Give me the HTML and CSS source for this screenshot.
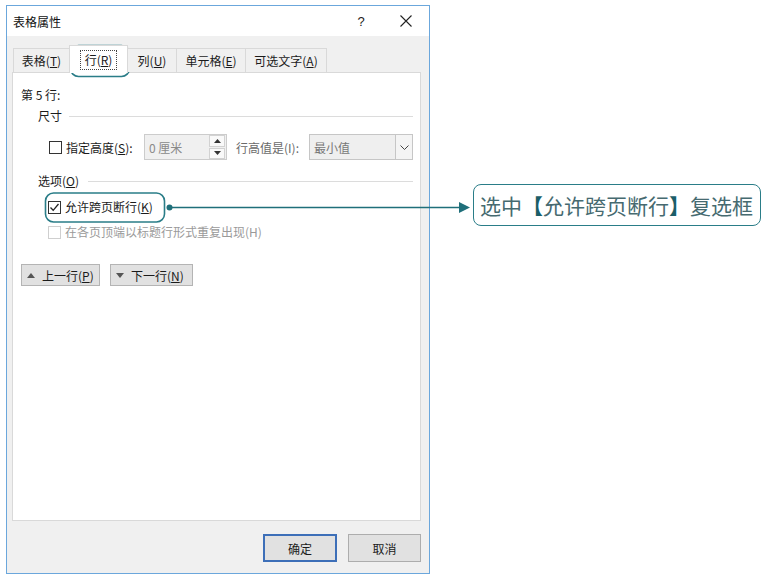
FILE: index.html
```html
<!DOCTYPE html>
<html lang="zh">
<head>
<meta charset="utf-8">
<title>表格属性</title>
<link rel="stylesheet" href="styles.css">
</head>
<body>
<div class="page">
  <div class="dialog">
    <div class="titlebar">
      <span class="title">表格属性</span>
      <span class="help">?</span>
      <span class="close">
        <svg width="12" height="12" viewBox="0 0 12 12"><path d="M0.5 0.5 L11.5 11.5 M11.5 0.5 L0.5 11.5" stroke="#222" stroke-width="1.1" fill="none"/></svg>
      </span>
    </div>
    <div class="body">
      <div class="tabs">
        <div class="tab t1">表格(<u>T</u>)</div>
        <div class="tab t2 active"><span class="focus">行(<u>R</u>)</span></div>
        <div class="tab t3">列(<u>U</u>)</div>
        <div class="tab t4">单元格(<u>E</u>)</div>
        <div class="tab t5">可选文字(<u>A</u>)</div>
      </div>
      <div class="panel">
        <div class="rowlabel">第 5 行:</div>
        <div class="group">
          <span class="gtitle">尺寸</span><span class="gline"></span>
        </div>
        <div class="ctrlrow">
          <span class="chkwrap">
            <span class="chk"></span>
            <span class="clabel">指定高度(<u>S</u>):</span>
          </span>
          <span class="spin">
            <span class="spinval">0 厘米</span>
            <span class="spinbtns">
              <span class="sb up"><svg width="7" height="4" viewBox="0 0 7 4"><path d="M0 4 L3.5 0 L7 4 Z" fill="#333"/></svg></span>
              <span class="sb down"><svg width="7" height="4" viewBox="0 0 7 4"><path d="M0 0 L3.5 4 L7 0 Z" fill="#333"/></svg></span>
            </span>
          </span>
          <span class="hlabel">行高值是(I):</span>
          <span class="select">
            <span class="selval">最小值</span>
            <span class="selbtn"><svg width="9" height="5" viewBox="0 0 9 5"><path d="M0.5 0.5 L4.5 4.5 L8.5 0.5" stroke="#444" stroke-width="1" fill="none"/></svg></span>
          </span>
        </div>
        <div class="group g2">
          <span class="gtitle">选项(<u>O</u>)</span><span class="gline"></span>
        </div>
        <div class="optrow">
          <span class="chk checked"><svg width="11" height="11" viewBox="0 0 11 11"><path d="M1.5 5.5 L4.2 8.3 L9.5 2" stroke="#222" stroke-width="1.3" fill="none"/></svg></span>
          <span class="olabel">允许跨页断行(<u>K</u>)</span>
        </div>
        <div class="optrow disabled">
          <span class="chk dis"></span>
          <span class="olabel">在各页顶端以标题行形式重复出现(H)</span>
        </div>
        <div class="navrow">
          <span class="navbtn b1"><svg width="8" height="5" viewBox="0 0 8 5"><path d="M0 5 L4 0 L8 5 Z" fill="#555"/></svg><span class="navtext">上一行(<u>P</u>)</span></span>
          <span class="navbtn b2"><svg width="8" height="5" viewBox="0 0 8 5"><path d="M0 0 L4 5 L8 0 Z" fill="#555"/></svg><span class="navtext">下一行(<u>N</u>)</span></span>
        </div>
      </div>
      <div class="footer">
        <span class="btn ok">确定</span>
        <span class="btn cancel">取消</span>
      </div>
    </div>
  </div>

  <svg class="overlay" width="764" height="577" viewBox="0 0 764 577">
    <rect x="70.5" y="45.5" width="59" height="31" rx="8" ry="8" fill="none" stroke="#2a7d88" stroke-width="1.6"/>
    <rect x="45.5" y="193" width="119" height="29" rx="8" ry="8" fill="none" stroke="#2a7d88" stroke-width="1.6"/>
    <circle cx="169.5" cy="207.5" r="3" fill="#1f6f7a"/>
    <line x1="169.5" y1="207.5" x2="462" y2="207.5" stroke="#1f6f7a" stroke-width="1.6"/>
    <path d="M459 202 L470 207.5 L459 213 Z" fill="#1f6f7a"/>
  </svg>

  <div class="callout">选中<span class="br">【</span>允许跨页断行<span class="br">】</span>复选框</div>
</div>
</body>
</html>
```

FILE: styles.css
```css
* { box-sizing: border-box; }
html, body { margin: 0; padding: 0; background: #ffffff; }
body {
  font-family: "Noto Sans CJK SC", "Microsoft YaHei", "Noto Sans", sans-serif;
  font-size: 12px;
  color: #1b1b1b;
}
.page {
  position: relative;
  width: 764px;
  height: 577px;
  padding: 5px 0 0 6px;
}
u { text-decoration: underline; text-underline-offset: 1px; }

.dialog {
  width: 424px;
  height: 569px;
  border: 1px solid #6ba7dc;
  display: flex;
  flex-direction: column;
  background: #fff;
}
.titlebar {
  height: 30px;
  display: flex;
  align-items: center;
  padding-left: 6px;
  background: #fff;
  flex: none;
}
.title { flex: 1; font-size: 12px; color: #111; }
.help {
  width: 10px;
  text-align: center;
  font-size: 13px;
  font-family: "Liberation Sans", sans-serif;
  color: #222;
  margin-right: 34px;
}
.close {
  width: 12px;
  height: 12px;
  margin-right: 17px;
  display: flex;
}

.body {
  flex: 1;
  display: flex;
  flex-direction: column;
  background: #f0f0f0;
  padding: 0 8px 0 5px;
}
.tabs {
  height: 36px;
  display: flex;
  align-items: flex-end;
  padding-left: 1px;
  flex: none;
  position: relative;
  z-index: 1;
}
.tab {
  height: 24px;
  border: 1px solid #d9d9d9;
  border-bottom: none;
  display: flex;
  align-items: center;
  justify-content: center;
  margin-right: -1px;
  background: #f0f0f0;
  color: #1b1b1b;
}
.t1 { width: 57px; }
.t2 { width: 59px; }
.t3 { width: 50px; }
.t4 { width: 70px; }
.t5 { width: 82px; }
.tab.active {
  height: 28px;
  background: #fff;
  margin-bottom: -1px;
}
.focus {
  border: 1px dotted #444;
  padding: 1px 4px;
  line-height: 16px;
}

.panel {
  flex: 1;
  background: #fff;
  border: 1px solid #d9d9d9;
  padding: 14px 7px 0 8px;
  display: flex;
  flex-direction: column;
}
.rowlabel { height: 16px; line-height: 16px; }
.group {
  height: 16px;
  margin-top: 5px;
  display: flex;
  align-items: center;
  padding-left: 17px;
}
.gtitle { line-height: 16px; }
.gline { flex: 1; height: 1px; background: #dcdcdc; margin-left: 7px; }
.g2 { margin-top: 13px; }
.g2 .gline { margin-left: 9px; }

.ctrlrow {
  height: 26px;
  margin-top: 10px;
  display: flex;
  align-items: center;
  padding-left: 28px;
}
.chkwrap { width: 95px; display: flex; align-items: center; }
.chk {
  width: 13px;
  height: 13px;
  border: 1px solid #333;
  background: #fff;
  flex: none;
  display: flex;
  align-items: center;
  justify-content: center;
}
.chk.dis { border-color: #cfcfcf; }
.clabel { margin-left: 4px; }
.spin {
  width: 83px;
  height: 26px;
  border: 1px solid #cccccc;
  background: #f0f0f0;
  display: flex;
  align-items: center;
  padding-left: 4px;
}
.spinval { flex: 1; color: #8a8a8a; }
.spinbtns {
  width: 16px;
  height: 24px;
  display: flex;
  flex-direction: column;
  margin-right: 1px;
  gap: 1px;
}
.sb {
  flex: 1;
  background: #f9f9f9;
  border: 1px solid #d2d2d2;
  display: flex;
  align-items: center;
  justify-content: center;
}
.hlabel { width: 73px; margin-left: 9px; color: #6a6a6a; }
.select {
  width: 104px;
  height: 26px;
  border: 1px solid #c6c6c6;
  background: #efefef;
  display: flex;
  align-items: center;
  padding-left: 4px;
}
.selval { flex: 1; color: #777; }
.selbtn {
  width: 17px;
  height: 24px;
  border-left: 1px solid #c6c6c6;
  background: #f4f4f4;
  display: flex;
  align-items: center;
  justify-content: center;
}

.optrow {
  height: 16px;
  margin-top: 10px;
  display: flex;
  align-items: center;
  padding-left: 27px;
}
.optrow.disabled { margin-top: 9px; color: #9a9a9a; }
.olabel { margin-left: 4px; line-height: 16px; }

.navrow {
  margin-top: 24px;
  height: 22px;
  display: flex;
  gap: 10px;
}
.navbtn {
  height: 22px;
  background: #e1e1e1;
  border: 1px solid #b4b4b4;
  display: flex;
  align-items: center;
  padding-left: 5px;
}
.navtext { margin-left: 7px; }
.b1 { width: 79px; }
.b2 { width: 83px; }

.footer {
  height: 52px;
  flex: none;
  display: flex;
  justify-content: flex-end;
  align-items: flex-start;
  padding-top: 13px;
  gap: 11px;
}
.btn {
  height: 28px;
  background: #e1e1e1;
  border: 1px solid #adadad;
  display: flex;
  align-items: center;
  justify-content: center;
}
.ok { width: 74px; border: 2px solid #3d6fb8; }
.cancel { width: 73px; }

.overlay {
  position: absolute;
  left: 0;
  top: 0;
  pointer-events: none;
}
.callout {
  position: absolute;
  left: 473px;
  top: 184px;
  width: 288px;
  height: 42px;
  border: 1.6px solid #2a7d88;
  border-radius: 8px;
  background: #fff;
  display: flex;
  align-items: center;
  padding-left: 6px;
  font-size: 21px;
  color: #466a70;
  white-space: nowrap;
}
.br { color: #1b5e68; font-weight: bold; }
```
